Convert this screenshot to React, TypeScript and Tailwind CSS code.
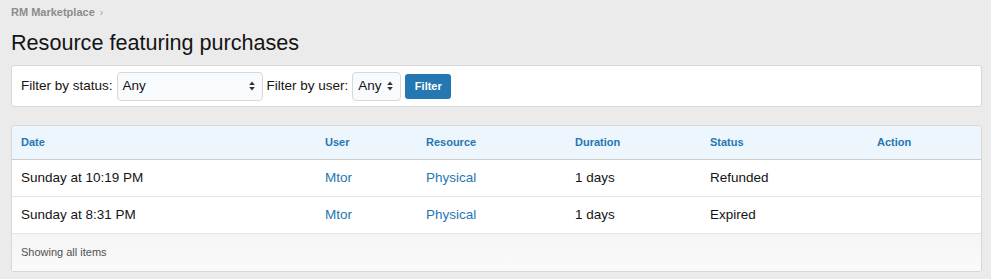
import React from 'react';

interface Purchase {
  date: string;
  user: string;
  resource: string;
  duration: string;
  status: string;
}

const purchases: Purchase[] = [
  { date: 'Sunday at 10:19 PM', user: 'Mtor', resource: 'Physical', duration: '1 days', status: 'Refunded' },
  { date: 'Sunday at 8:31 PM', user: 'Mtor', resource: 'Physical', duration: '1 days', status: 'Expired' },
];

const SelectArrows = () => (
  <svg width="6" height="10" viewBox="0 0 6 10" className="absolute right-[7px] top-1/2 -translate-y-1/2">
    <path d="M3 0.5 L5.8 4 H0.2 Z" fill="#333" />
    <path d="M3 9.5 L5.8 6 H0.2 Z" fill="#333" />
  </svg>
);

const FakeSelect = ({ value, width }: { value: string; width: string }) => (
  <div className={`relative h-[29px] ${width} rounded-[4px] border border-[#d8d8d8] bg-[#f8fbfe] pl-[5px] flex items-center text-[13.5px] text-[#141414]`}>
    {value}
    <SelectArrows />
  </div>
);

export default function App() {
  const cols = ['w-[304px]', 'w-[101px]', 'w-[149px]', 'w-[135px]', 'w-[167px]', 'flex-1'];
  return (
    <div className="min-h-[279px] bg-[#ebebeb] pl-[11px] pr-[9px] pt-[4px] font-['Liberation_Sans',Arial,sans-serif]">
      <div className="flex items-center h-[16px] text-[11px] font-bold text-[#8c8c8c]">
        RM Marketplace <span className="ml-[5px] font-normal text-[10px] text-[#a0a0a0]">›</span>
      </div>
      <h1 className="mt-[10px] text-[21.6px] leading-[26px] text-[#141414]">Resource featuring purchases</h1>

      <div className="mt-[9px] h-[42px] rounded-[3px] border border-[#d8d8d8] bg-white flex items-center pl-[9px] text-[13.5px] text-[#141414]">
        <span className="mr-[4px]">Filter by status:</span>
        <FakeSelect value="Any" width="w-[146px]" />
        <span className="ml-[4px] mr-[4px]">Filter by user:</span>
        <FakeSelect value="Any" width="w-[49px]" />
        <button className="ml-[4px] mt-[1px] h-[25px] w-[46px] rounded-[3px] bg-[#2577b1] text-white text-[11px] font-bold">Filter</button>
      </div>

      <div className="mt-[18px] rounded-[3px] border border-[#d8d8d8] bg-white overflow-hidden">
        <div className="flex h-[34px] items-center bg-[#edf5fd] border-b border-[#cbcbcb] pl-[9px] text-[11px] font-bold text-[#2577b1]">
          {['Date', 'User', 'Resource', 'Duration', 'Status', 'Action'].map((h, i) => (
            <div key={h} className={cols[i]}>{h}</div>
          ))}
        </div>
        {purchases.map((p, idx) => (
          <div key={idx} className="flex h-[37px] items-center border-b border-[#e4e4e4] pl-[9px] text-[13.5px] text-[#141414]">
            <div className={cols[0]}>{p.date}</div>
            <div className={`${cols[1]} text-[#2577b1]`}>{p.user}</div>
            <div className={`${cols[2]} text-[#2577b1]`}>{p.resource}</div>
            <div className={cols[3]}>{p.duration}</div>
            <div className={cols[4]}>{p.status}</div>
            <div className={cols[5]}></div>
          </div>
        ))}
        <div className="h-[37px] flex items-center pl-[9px] bg-gradient-to-b from-[#f5f5f5] to-[#fafafa] text-[11px] text-[#505050]">
          Showing all items
        </div>
      </div>
    </div>
  );
}
